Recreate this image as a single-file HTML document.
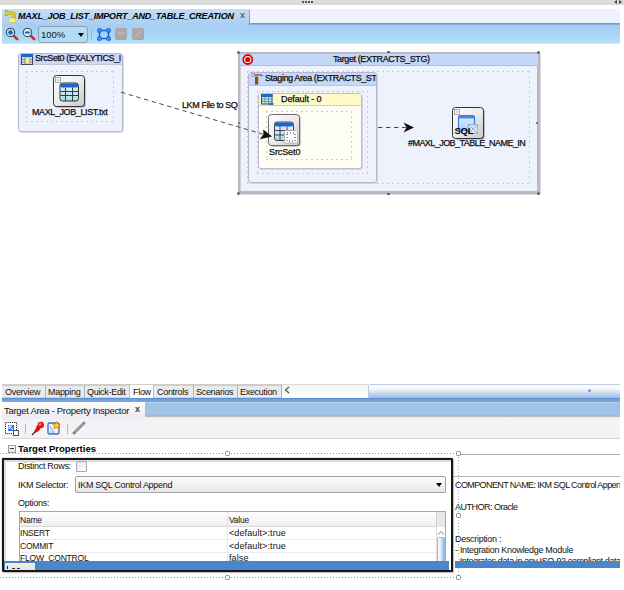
<!DOCTYPE html>
<html><head><meta charset="utf-8">
<style>
*{margin:0;padding:0;box-sizing:border-box}
html,body{width:624px;height:590px;overflow:hidden;background:#fff;font-family:"Liberation Sans",sans-serif;color:#000}
.a{position:absolute}
.tb{font-size:9px;line-height:11px;white-space:nowrap;letter-spacing:-0.3px;color:#111}
.tr{font-size:8.5px;line-height:10px;white-space:nowrap;letter-spacing:-0.2px;color:#111}
.dsh{background:repeating-linear-gradient(90deg,#cbcbd2 0 2px,transparent 2px 5px) 0 0/100% 1px no-repeat,repeating-linear-gradient(90deg,#cbcbd2 0 2px,transparent 2px 5px) 0 100%/100% 1px no-repeat,repeating-linear-gradient(#cbcbd2 0 2px,transparent 2px 5px) 0 0/1px 100% no-repeat,repeating-linear-gradient(#cbcbd2 0 2px,transparent 2px 5px) 100% 0/1px 100% no-repeat}
.t9{font-size:9px;line-height:11px;white-space:nowrap;letter-spacing:-0.4px;-webkit-text-stroke:0.25px #222}
</style></head><body>
<!-- top strip -->
<div class="a" style="left:0;top:0;width:624px;height:5px;background:#dcdcdc"></div>
<div class="a" style="left:302px;top:1px;width:12px;height:2px;background:repeating-linear-gradient(90deg,#555 0 2px,transparent 2px 3px)"></div>
<div class="a" style="left:614px;top:0;width:0;height:0;border-top:2px solid transparent;border-bottom:2px solid transparent;border-right:3px solid #444"></div>
<div class="a" style="left:619px;top:0;width:0;height:0;border-top:2px solid transparent;border-bottom:2px solid transparent;border-left:3px solid #444"></div>

<!-- editor tab bar -->
<div class="a" style="left:2px;top:9px;width:618px;height:15px;background:#eef2fd;border-bottom:1px solid #6b9be0"></div>
<!-- toolbar -->
<div class="a" style="left:2px;top:24px;width:618px;height:20px;background:linear-gradient(#80ace4 0,#80ace4 1px,#a6ccf2 1px,#a8d4f4 50%,#b2e2f8);border-bottom:1px solid #c4ecfa"></div>
<div class="a" style="left:2px;top:9px;width:248px;height:16px;background:linear-gradient(#c6ddf6,#a8cff3);border-right:1px solid #7aa6e0;border-radius:0 2px 0 0"></div>


<!-- editor tab title -->
<svg class="a" style="left:5px;top:10px" width="12" height="13" viewBox="0 0 12 13">
 <path d="M0.5 0.5h2v1.5h5q3 0 3 3v2.5h-2.5v-2q0-1-1-1h-4.5v1h-2z" fill="#e6d82a" stroke="#a89a10" stroke-width="0.7"/>
 <path d="M4.5 8h5.5l1 4.5h-7.5z" fill="#f4ee96" stroke="#cfc44a" stroke-width="0.7"/></svg>
<div class="a" style="left:18px;top:11px;font-size:9px;line-height:11px;font-weight:bold;font-style:italic;letter-spacing:-0.2px;white-space:nowrap">MAXL_JOB_LIST_IMPORT_AND_TABLE_CREATION</div>
<div class="a" style="left:240px;top:10px;font-size:9px;line-height:11px;color:#606060;font-weight:bold">x</div>

<!-- toolbar icons -->
<svg class="a" style="left:5px;top:27px" width="15" height="14" viewBox="0 0 15 14">
 <line x1="8.5" y1="8.5" x2="12.2" y2="12.2" stroke="#c83030" stroke-width="2.6" stroke-linecap="round"/>
 <circle cx="5.5" cy="5.4" r="4.2" fill="#b4e2ea" stroke="#4a4a4a" stroke-width="1.1"/>
 <path d="M5.5 2.6l2.8 2.8-2.8 2.8-2.8-2.8z" fill="#1a64d8"/></svg>
<svg class="a" style="left:22px;top:27px" width="15" height="14" viewBox="0 0 15 14">
 <line x1="8.5" y1="8.5" x2="12.2" y2="12.2" stroke="#c83030" stroke-width="2.6" stroke-linecap="round"/>
 <circle cx="5.5" cy="5.4" r="4.2" fill="#c8eef2" stroke="#4a4a4a" stroke-width="1.1"/>
 <rect x="2.8" y="4.4" width="5.4" height="2" rx="1" fill="#1a64d8"/></svg>
<div class="a" style="left:38px;top:26px;width:50px;height:17px;background:linear-gradient(#b6daf6,#b0dcf6);border:1px solid #96a0aa;border-radius:3px"></div>
<div class="a" style="left:41px;top:29px;font-size:9.5px;line-height:11px;color:#111">100%</div>
<div class="a" style="left:78px;top:33px;width:0;height:0;border-left:3.5px solid transparent;border-right:3.5px solid transparent;border-top:4px solid #000"></div>
<div class="a" style="left:91px;top:30px;width:1px;height:10px;background:#9ab8cc"></div>
<svg class="a" style="left:97px;top:28px" width="14" height="13" viewBox="0 0 14 13">
 <rect x="2.5" y="2.5" width="9" height="8" fill="none" stroke="#1a58d0" stroke-width="1.4"/>
 <circle cx="2.5" cy="2.5" r="2.2" fill="#3a8af0" stroke="#1a58c8" stroke-width="0.6"/><circle cx="11.5" cy="2.5" r="2.2" fill="#3a8af0" stroke="#1a58c8" stroke-width="0.6"/>
 <circle cx="2.5" cy="10.5" r="2.2" fill="#3a8af0" stroke="#1a58c8" stroke-width="0.6"/><circle cx="11.5" cy="10.5" r="2.2" fill="#3a8af0" stroke="#1a58c8" stroke-width="0.6"/></svg>
<div class="a" style="left:115px;top:28px;width:12px;height:12px;background:#aba7a4;border-radius:2px"></div>
<div class="a" style="left:118px;top:32px;width:6px;height:3px;border:1px solid #bcb8b6"></div>
<div class="a" style="left:132px;top:28px;width:12px;height:12px;background:#aba7a4;border-radius:2px"></div><svg class="a" style="left:134px;top:30px" width="8" height="8"><path d="M1 7L7 1" stroke="#bcb8b6" stroke-width="1.5"/></svg>

<!-- SrcSet0 (EXALYTICS) box -->
<div class="a" style="left:18px;top:53px;width:105px;height:79px;background:#eef2fc;border:1px solid #b9b6cc;border-radius:3px;box-shadow:1px 1px 0 #e0dcea"></div>
<div class="a" style="left:19px;top:54px;width:103px;height:11px;background:#cdd8f6;border-bottom:1px solid #c4c6d8"></div>
<svg class="a" style="left:21px;top:54px" width="12" height="11" viewBox="0 0 12 11">
 <rect x="0.5" y="0.5" width="11" height="10" fill="#bfe4ec" stroke="#3c4a50" stroke-width="1"/><rect x="0" y="0" width="12" height="3" fill="#1a68d0"/>
 <path d="M1 5.5h10M1 8h10M4 3v7.5M8 3v7.5" stroke="#6a8088" stroke-width="0.8"/>
 <rect x="4.5" y="3.5" width="4" height="6" fill="#f4d470"/><rect x="5.5" y="4.5" width="2" height="4" fill="#fff6c8"/></svg>
<div class="a t9" style="left:35px;top:53px;width:86px;overflow:hidden">SrcSet0 (EXALYTICS_I</div>
<div class="a dsh" style="left:26px;top:71px;width:88px;height:51px"></div>

<div class="a t9" style="left:182px;top:100px">LKM File to SQL</div>
<!-- Target box -->
<div class="a" style="left:238px;top:52px;width:302px;height:142px;background:#eef2fc;border-style:solid;border-color:#bab8c0;border-width:2px 3px 3px 2px;border-radius:2px;box-shadow:inset 1px 1px 0 #d0ced8,1px 1px 0 #e0d8e6"></div>
<div class="a" style="left:240px;top:54px;width:298px;height:12px;background:#c6d8fa;border-bottom:1px solid #b9bcc8"></div>
<svg class="a" style="left:242px;top:54px" width="12" height="12" viewBox="0 0 12 12"><circle cx="5.8" cy="5.5" r="5.4" fill="#e00000"/><circle cx="5.8" cy="5.5" r="3.6" fill="#fff"/><circle cx="5.8" cy="5.5" r="2.6" fill="#d80000"/></svg>
<div class="a t9" style="left:333px;top:54px">Target (EXTRACTS_STG)</div>
<div class="a" style="left:237px;top:51px;width:3px;height:3px;background:#666;border-radius:50%"></div>
<div class="a" style="left:537px;top:51px;width:3px;height:3px;background:#666;border-radius:50%"></div>
<div class="a" style="left:237px;top:192px;width:3px;height:3px;background:#666;border-radius:50%"></div>
<div class="a" style="left:537px;top:192px;width:3px;height:3px;background:#666;border-radius:50%"></div><div class="a" style="left:387px;top:51px;width:3px;height:2px;background:#555;border-radius:1px"></div><div class="a" style="left:387px;top:193px;width:3px;height:2px;background:#555;border-radius:1px"></div><div class="a" style="left:536px;top:122px;width:2px;height:2px;background:#777"></div><div class="a" style="left:238px;top:122px;width:2px;height:2px;background:#777"></div>
<div class="a dsh" style="left:247px;top:71px;width:283px;height:113px"></div>

<!-- Staging area -->
<div class="a" style="left:248px;top:72px;width:129px;height:111px;background:#eef2fc;border:1px solid #b9b6cc;border-radius:3px;box-shadow:1px 1px 0 #d8d0ea"></div>
<div class="a" style="left:249px;top:73px;width:127px;height:13px;background:#c6d8fa;border-bottom:1px solid #c0c4d0"></div>
<svg class="a" style="left:251px;top:73px" width="12" height="12" viewBox="0 0 12 12">
 <path d="M2 1.2h7.5q2 0 2.5 2h-1.5q-0.5-0.6-1.5-0.6h-6.5z" fill="#555"/><circle cx="1.8" cy="2" r="1.6" fill="#ddd" stroke="#777" stroke-width="0.6"/>
 <rect x="4" y="3.5" width="3.2" height="8" fill="#8a4e1a"/></svg>
<div class="a t9" style="left:265px;top:73px;width:111px;overflow:hidden">Staging Area (EXTRACTS_STG)</div>
<div class="a dsh" style="left:257px;top:91px;width:111px;height:83px"></div>

<!-- Default box -->
<div class="a" style="left:258px;top:93px;width:104px;height:76px;background:#fffef4;border:1px solid #c0bccc;border-radius:3px;box-shadow:1px 1px 0 #d8d0ea"></div>
<div class="a" style="left:259px;top:94px;width:102px;height:12px;background:#fefac8;border-bottom:1px solid #d4d0bc"></div>
<svg class="a" style="left:261px;top:94px" width="13" height="11" viewBox="0 0 13 11">
 <rect x="0.5" y="0.5" width="10.5" height="9.5" fill="#c4e6ee" stroke="#3c4a50" stroke-width="1"/><rect x="0" y="0" width="11.5" height="3" fill="#1a68d0"/>
 <path d="M1 5h10M1 7.5h10M4 3v7M7.5 3v7" stroke="#6a8088" stroke-width="0.8"/>
 <rect x="7.5" y="9" width="5" height="2" fill="#2a70c8"/></svg>
<div class="a t9" style="left:281px;top:94px;letter-spacing:-0.1px">Default - 0</div>
<div class="a dsh" style="left:266px;top:111px;width:86px;height:49px"></div>
<svg class="a" style="left:53px;top:75px" width="33" height="33" viewBox="0 0 33 33"><defs>
<linearGradient id="ig" x1="0" y1="0" x2="1" y2="1"><stop offset="0" stop-color="#ffffff"/><stop offset="0.5" stop-color="#ececec"/><stop offset="1" stop-color="#c8c8c8"/></linearGradient>
<linearGradient id="cy" x1="0" y1="0" x2="0" y2="1"><stop offset="0" stop-color="#e8f8fc"/><stop offset="1" stop-color="#a8dce8"/></linearGradient>
<linearGradient id="wb" x1="0" y1="0" x2="0" y2="1"><stop offset="0" stop-color="#e0f0ff"/><stop offset="1" stop-color="#a8d0f8"/></linearGradient>
</defs>
<rect x="1.5" y="1.5" width="31" height="31" rx="3" fill="#555" opacity="0.6"/>
<rect x="0.5" y="0.5" width="31" height="31" rx="3" fill="url(#ig)" stroke="#333" stroke-width="1"/>
<rect x="2.5" y="2.5" width="5" height="5" fill="#f4f4f4" stroke="#888" stroke-width="0.7"/><rect x="4.5" y="4.5" width="1" height="1" fill="#666"/>
<rect x="7" y="8" width="18.5" height="18" rx="2.5" fill="url(#cy)" stroke="#333" stroke-width="1"/>
<rect x="7.5" y="8.5" width="17.5" height="4" rx="1.5" fill="#1a64d0"/>
<path d="M7.5 16.5h17.5M7.5 20.5h17.5M12.5 12.5v13.5M19.5 12.5v13.5" stroke="#2e3e44" stroke-width="1"/>
</svg>
<svg class="a" style="left:268px;top:114px" width="33" height="33" viewBox="0 0 33 33"><defs>
<linearGradient id="ig" x1="0" y1="0" x2="1" y2="1"><stop offset="0" stop-color="#ffffff"/><stop offset="0.5" stop-color="#ececec"/><stop offset="1" stop-color="#c8c8c8"/></linearGradient>
<linearGradient id="cy" x1="0" y1="0" x2="0" y2="1"><stop offset="0" stop-color="#e8f8fc"/><stop offset="1" stop-color="#a8dce8"/></linearGradient>
<linearGradient id="wb" x1="0" y1="0" x2="0" y2="1"><stop offset="0" stop-color="#e0f0ff"/><stop offset="1" stop-color="#a8d0f8"/></linearGradient>
</defs>
<rect x="1.5" y="1.5" width="31" height="31" rx="3" fill="#555" opacity="0.6"/>
<rect x="0.5" y="0.5" width="31" height="31" rx="3" fill="url(#ig)" stroke="#6a6a6a" stroke-width="1"/>
<rect x="6.5" y="8" width="19" height="18.5" rx="2.5" fill="url(#cy)" stroke="#444" stroke-width="1"/>
<rect x="7" y="8.5" width="18" height="4" rx="1.5" fill="#1a64d0"/>
<path d="M7 16.5h18M7 21h18M12 12.5v14M19 12.5v14" stroke="#445" stroke-width="1"/>
<rect x="16.5" y="16.5" width="13" height="12.5" rx="1" fill="#fff" stroke="#aaa" stroke-width="0.8"/>
<rect x="19" y="19" width="8" height="8" fill="none" stroke="#333" stroke-width="1" stroke-dasharray="1,2"/>
</svg>
<svg class="a" style="left:452px;top:107px" width="33" height="33" viewBox="0 0 33 33"><defs>
<linearGradient id="ig" x1="0" y1="0" x2="1" y2="1"><stop offset="0" stop-color="#ffffff"/><stop offset="0.5" stop-color="#ececec"/><stop offset="1" stop-color="#c8c8c8"/></linearGradient>
<linearGradient id="cy" x1="0" y1="0" x2="0" y2="1"><stop offset="0" stop-color="#e8f8fc"/><stop offset="1" stop-color="#a8dce8"/></linearGradient>
<linearGradient id="wb" x1="0" y1="0" x2="0" y2="1"><stop offset="0" stop-color="#e0f0ff"/><stop offset="1" stop-color="#a8d0f8"/></linearGradient>
</defs>
<rect x="1.5" y="1.5" width="31" height="31" rx="3" fill="#555" opacity="0.6"/>
<rect x="0.5" y="0.5" width="31" height="31" rx="3" fill="url(#ig)" stroke="#333" stroke-width="1"/>
<rect x="2.5" y="2.5" width="5" height="5" fill="#f4f4f4" stroke="#888" stroke-width="0.7"/><rect x="4.5" y="4.5" width="1" height="1" fill="#666"/>
<rect x="6.5" y="8.5" width="16" height="15" rx="1.5" fill="url(#wb)" stroke="#3a78e0" stroke-width="1.2"/>
<rect x="7" y="9" width="15" height="2.5" fill="#4a86ea"/>
<rect x="16.5" y="17.5" width="9" height="9" fill="#dbe6f4" stroke="#8aa4cc" stroke-width="0.8"/>
<path d="M16.5 17.5l9 9M25.5 17.5l-9 9" stroke="#8aa4cc" stroke-width="0.8"/>
<text x="2.5" y="26.5" font-family="Liberation Sans" font-weight="bold" font-size="9.5" fill="#000" letter-spacing="-0.3">SQL</text>
</svg>
<div class="a t9" style="left:32px;top:107px">MAXL_JOB_LIST.txt</div>
<div class="a t9" style="left:269px;top:147px;letter-spacing:-0.1px">SrcSet0</div>
<div class="a t9" style="left:408px;top:138px;letter-spacing:-0.55px">#MAXL_JOB_TABLE_NAME_IN</div>
<!-- diagram: connector lines -->
<svg class="a" style="left:0;top:0" width="624" height="384">
 <line x1="121" y1="92.2" x2="263" y2="134.2" stroke="#4a4a4a" stroke-width="1" stroke-dasharray="4.5,3.5"/>
 <path d="M272 136.5 L259.8 139.3 L263.5 134.2 L263.2 129.5 Z" fill="#111"/>
 <line x1="378" y1="127.5" x2="406" y2="127.5" stroke="#4a4a4a" stroke-width="1" stroke-dasharray="4.5,3.5"/>
 <path d="M414 127.5 L403.5 122.5 L406.5 127.5 L403.5 132.5 Z" fill="#111"/>
</svg>


<!-- bottom tabs -->
<div class="a" style="left:2px;top:384px;width:618px;height:14px;background:#fff"></div>
<div class="a" style="left:2px;top:384px;width:280px;height:14px;background:#ebebeb;border-top:2px solid #cdcdcd;border-bottom:1px solid #d4d4d4"></div>
<div class="a" style="left:129px;top:384px;width:25px;height:15px;background:#fff;border-left:1px solid #c0c0c0;border-right:1px solid #c0c0c0;border-top:1px solid #d0d0d0"></div>
<div class="a" style="left:45px;top:385px;width:1px;height:13px;background:#b0b0b0"></div>
<div class="a" style="left:84px;top:385px;width:1px;height:13px;background:#b0b0b0"></div>
<div class="a" style="left:193px;top:385px;width:1px;height:13px;background:#b0b0b0"></div>
<div class="a" style="left:237px;top:385px;width:1px;height:13px;background:#b0b0b0"></div>
<div class="a" style="left:281px;top:385px;width:1px;height:13px;background:#b0b0b0"></div>
<div class="a tb" style="left:5px;top:387px">Overview</div>
<div class="a tb" style="left:48px;top:387px">Mapping</div>
<div class="a tb" style="left:87px;top:387px">Quick-Edit</div>
<div class="a tb" style="left:133px;top:387px">Flow</div>
<div class="a tb" style="left:157px;top:387px">Controls</div>
<div class="a tb" style="left:196px;top:387px">Scenarios</div>
<div class="a tb" style="left:240px;top:387px">Execution</div>
<div class="a" style="left:282px;top:384px;width:86px;height:14px;background:linear-gradient(#f2f2f4,#fff);border-top:1px solid #dcdcdc"></div>
<svg class="a" style="left:284px;top:386px" width="6" height="8" viewBox="0 0 6 8"><path d="M5 1L1.5 4L5 7" fill="none" stroke="#555" stroke-width="1.2"/></svg>
<div class="a" style="left:368px;top:384px;width:252px;height:14px;background:linear-gradient(#fdfeff,#f4f7fb 30%,#c8d8ec 65%,#9cbce2);border-top:1px solid #bccce2;border-left:1px solid #b8cce4;border-radius:2px 0 0 0"></div><div class="a" style="left:588px;top:389px;width:3px;height:3px;border-radius:50%;background:#6a9ae8"></div>
<div class="a" style="left:2px;top:398px;width:618px;height:1px;background:#5a90d6"></div>
<div class="a" style="left:2px;top:399px;width:618px;height:3px;background:linear-gradient(#6ca0da,#7aaade)"></div>

<!-- property inspector title -->
<div class="a" style="left:2px;top:402px;width:618px;height:15px;background:linear-gradient(#b6d0ec 0 1px,#a2c2e8 1px 13px,#a8b8cc 13px 14px,#c0b8b4 14px)"></div>
<div class="a" style="left:2px;top:402px;width:143px;height:15px;background:linear-gradient(#ffffff,#eeecee)"></div>
<div class="a tb" style="left:4px;top:405px;font-size:9.5px">Target Area - Property Inspector</div>
<div class="a tb" style="left:135px;top:404px;color:#444;font-size:9px;font-weight:bold">x</div>
<!-- inspector toolbar -->
<div class="a" style="left:2px;top:417px;width:618px;height:22px;background:linear-gradient(#eceef8 0,#f6f2f4 3px,#f6f2f4 11px,#f4f4fc 11px,#f4f4fc 16px,#f6f2f4 16px);border-bottom:1px solid #d8d8d8"></div>
<svg class="a" style="left:5px;top:422px" width="14" height="14" viewBox="0 0 14 14">
 <rect x="0.5" y="0.5" width="11" height="11" fill="#fff" stroke="#222" stroke-width="1" stroke-dasharray="1.2,1"/>
 <rect x="3" y="3" width="6" height="6" fill="#3a78e0"/><path d="M4 4l4 4M4 4h3M4 4v3" stroke="#fff" stroke-width="1"/>
 <rect x="8.5" y="8.5" width="5" height="5" fill="#fff" stroke="#555" stroke-width="1"/></svg>
<div class="a" style="left:25px;top:424px;width:1px;height:10px;background:#b8b8b8"></div>
<svg class="a" style="left:31px;top:421px" width="14" height="15" viewBox="0 0 14 15">
 <path d="M1 14L5.5 9.5" stroke="#333" stroke-width="1.3"/>
 <ellipse cx="6.5" cy="8.5" rx="3.8" ry="1.8" transform="rotate(-45 6.5 8.5)" fill="#d81010"/>
 <path d="M6 7L9 4" stroke="#c00" stroke-width="3"/>
 <circle cx="9.8" cy="4" r="3.2" fill="#e81818"/><circle cx="9" cy="3.2" r="1.2" fill="#ff8080"/></svg>
<svg class="a" style="left:47px;top:421px" width="14" height="14" viewBox="0 0 14 14">
 <rect x="1" y="2" width="11" height="11" rx="1.5" fill="#eaf2fc" stroke="#3470d8" stroke-width="1.4"/>
 <path d="M3 5l3 5M3 11h5" stroke="#8090a0" stroke-width="0.8"/>
 <path d="M9.5 0.5l1.2 2.4 2.6.4-1.9 1.8.5 2.6-2.4-1.2-2.4 1.2.5-2.6-1.9-1.8 2.6-.4z" fill="#ffd020" stroke="#d07000" stroke-width="0.7"/></svg>
<div class="a" style="left:67px;top:424px;width:1px;height:10px;background:#b8b8b8"></div>
<svg class="a" style="left:72px;top:421px" width="14" height="14" viewBox="0 0 14 14"><path d="M2 12L12 2" stroke="#8a8a8a" stroke-width="3" stroke-linecap="round"/><path d="M2.5 11L11 2.5" stroke="#c4c4c4" stroke-width="0.8"/></svg>

<!-- Target Properties -->
<div class="a" style="left:8px;top:445px;width:8px;height:8px;border:1px solid #999;background:linear-gradient(#fff,#e4e4e4)"></div>
<div class="a" style="left:10px;top:448px;width:4px;height:1px;background:#333"></div>
<div class="a" style="left:18px;top:443px;font-size:9.5px;line-height:11px;font-weight:bold;white-space:nowrap">Target Properties</div>
<div class="a" style="left:0;top:453px;width:458px;height:1px;background:repeating-linear-gradient(90deg,#999 0 1px,transparent 1px 3px)"></div>
<div class="a" style="left:458px;top:454px;width:162px;height:1px;background:#b0b0b0"></div>
<div class="a" style="left:458px;top:454px;width:1px;height:122px;background:repeating-linear-gradient(#aaa 0 1px,transparent 1px 3px)"></div>
<div class="a" style="left:0;top:577px;width:458px;height:1px;background:repeating-linear-gradient(90deg,#999 0 1px,transparent 1px 3px)"></div>
<div class="a" style="left:225px;top:451px;width:5px;height:5px;border:1px solid #888;border-radius:1.5px;background:#fff"></div>
<div class="a" style="left:456px;top:451px;width:5px;height:5px;border:1px solid #888;border-radius:1.5px;background:#fff"></div>
<div class="a" style="left:456px;top:513px;width:5px;height:5px;border:1px solid #888;border-radius:1.5px;background:#fff"></div>
<div class="a" style="left:225px;top:575px;width:5px;height:5px;border:1px solid #888;border-radius:1.5px;background:#fff"></div>
<div class="a" style="left:456px;top:575px;width:5px;height:5px;border:1px solid #888;border-radius:1.5px;background:#fff"></div>

<!-- black selection box -->
<div class="a" style="left:2px;top:458px;width:451px;height:114px;background:#fff;border:2px solid #181818;border-radius:1px;box-shadow:inset 2px 2px 0 #dedede,-1px -1px 0 #e6e6e6,1px 1px 1px #bbb"></div>
<div class="a tb" style="left:18px;top:461px">Distinct Rows:</div>
<div class="a" style="left:76px;top:461px;width:11px;height:11px;border:1px solid #aaaaaa;background:linear-gradient(135deg,#e8e8e8,#fff);border-radius:1px"></div>
<div class="a tb" style="left:18px;top:480px">IKM Selector:</div>
<div class="a" style="left:75px;top:476px;width:371px;height:17px;border:1px solid #a0a0a0;border-radius:2px;background:linear-gradient(#fdfdfd,#e6e6e8)"></div>
<div class="a tb" style="left:78px;top:480px">IKM SQL Control Append</div>
<div class="a" style="left:436px;top:483px;width:0;height:0;border-left:3.5px solid transparent;border-right:3.5px solid transparent;border-top:4px solid #000"></div>
<div class="a tb" style="left:18px;top:498px">Options:</div>
<!-- table -->
<div class="a" style="left:19px;top:511px;width:427px;height:51px;border:1px solid #a8a8a8;border-bottom:none;background:#fff"></div>
<div class="a" style="left:20px;top:512px;width:416px;height:15px;background:linear-gradient(#fff,#f0eef2);border-bottom:1px solid #d8d8d8"></div>
<div class="a" style="left:436px;top:512px;width:9px;height:15px;background:#e8e8e8;border-left:1px solid #d0d0d0"></div>
<div class="a" style="left:227px;top:512px;width:1px;height:50px;background:#e4e4e4"></div>
<div class="a" style="left:20px;top:539px;width:416px;height:1px;background:#ececec"></div>
<div class="a" style="left:20px;top:552px;width:416px;height:1px;background:#ececec"></div>
<div class="a tr" style="left:20px;top:515px">Name</div>
<div class="a tr" style="left:229px;top:515px">Value</div>
<div class="a tr" style="left:20px;top:528px">INSERT</div>
<div class="a tr" style="left:229px;top:528px;font-size:9px;letter-spacing:0.1px">&lt;default&gt;:true</div>
<div class="a tr" style="left:20px;top:541px">COMMIT</div>
<div class="a tr" style="left:229px;top:541px;font-size:9px;letter-spacing:0.1px">&lt;default&gt;:true</div>
<div class="a" style="left:20px;top:553px;width:416px;height:8px;overflow:hidden"><div class="tr" style="position:absolute;left:0;top:0">FLOW_CONTROL</div><div class="tr" style="position:absolute;left:209px;top:0;font-size:9px;letter-spacing:0.1px">false</div></div>
<div class="a" style="left:436px;top:527px;width:9px;height:35px;background:#fff;border-left:1px solid #e0e0e0"></div>
<svg class="a" style="left:437px;top:530px" width="8" height="5" viewBox="0 0 8 5"><path d="M1 4.5L4 1.5L7 4.5" fill="none" stroke="#777" stroke-width="1"/></svg>
<div class="a" style="left:437px;top:537px;width:8px;height:25px;background:linear-gradient(90deg,#fff,#cfe0f4 60%,#8ab0e0);border:1px solid #9ab8e0;border-bottom:none;border-radius:2px 2px 0 0"></div>
<div class="a" style="left:4px;top:561px;width:445px;height:9px;background:#4a86cc"></div>
<div class="a" style="left:5px;top:563px;width:30px;height:7px;background:linear-gradient(#f0f0f0,#e4e4e4)"></div>
<div class="a" style="left:7px;top:566px;width:1px;height:3px;background:#222"></div>
<div class="a" style="left:12px;top:568px;width:3px;height:1px;background:#333"></div>
<div class="a" style="left:17px;top:568px;width:3px;height:1px;background:#333"></div>

<!-- right description -->
<div class="a" style="left:453px;top:476px;width:167px;height:1px;background:#b8b8b8"></div>
<div class="a tb" style="left:455px;top:480px;width:165px;overflow:hidden;letter-spacing:-0.6px">COMPONENT NAME: IKM SQL Control Append</div>
<div class="a tb" style="left:455px;top:502px;letter-spacing:-0.5px">AUTHOR: Oracle</div>
<div class="a tb" style="left:455px;top:534px">Description :</div>
<div class="a tb" style="left:455px;top:545px">- Integration Knowledge Module</div>
<div class="a" style="left:455px;top:554px;width:165px;height:7px;overflow:hidden"><div class="tb" style="position:absolute;left:0;top:2px;letter-spacing:-0.4px">- Integrates data in any ISO-92 compliant database</div></div>
<div class="a" style="left:455px;top:561px;width:165px;height:7px;background:#4a86cc"></div>
</body></html>
